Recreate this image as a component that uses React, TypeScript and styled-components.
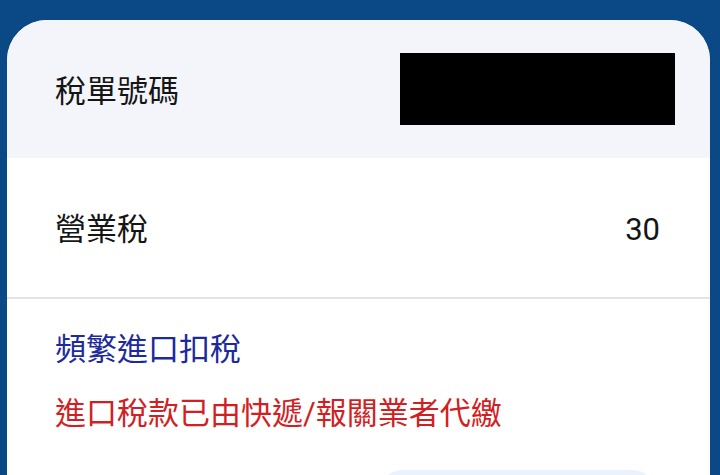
import React from "react";
import styled, { createGlobalStyle } from "styled-components";

const Global = createGlobalStyle`
  html, body {
    margin: 0;
    padding: 0;
    background: #0a4886;
    height: 100%;
    overflow: hidden;
  }
  body {
    font-family: Roboto, "Noto Sans CJK TC", "Noto Sans", sans-serif;
  }
`;

const Page = styled.div`
  width: 720px;
  height: 475px;
  box-sizing: border-box;
  padding: 20px 10px 0 7px;
  overflow: hidden;
`;

const Card = styled.div`
  background: #ffffff;
  border-radius: 40px 40px 0 0;
  overflow: hidden;
  display: flex;
  flex-direction: column;
  height: 100%;
`;

const Row = styled.div<{ $tint?: boolean; $height: number }>`
  display: flex;
  align-items: center;
  justify-content: space-between;
  height: ${(p) => p.$height}px;
  padding: 0 50px 0 48px;
  background: ${(p) => (p.$tint ? "#f3f5fa" : "#ffffff")};
  flex-shrink: 0;
`;

const Label = styled.span`
  font-size: 31px;
  line-height: 36px;
  padding-top: 5px;
  color: #151515;
`;

const Value = styled.span`
  font-size: 31px;
  line-height: 36px;
  padding-top: 5px;
  color: #151515;
`;

const Redacted = styled.div`
  width: 275px;
  height: 72px;
  background: #000;
  margin-right: -15px;
`;

const Divider = styled.div`
  height: 2px;
  background: #e3e4e6;
  flex-shrink: 0;
`;

const Notes = styled.div`
  display: flex;
  flex-direction: column;
  gap: 28px;
  padding: 33px 48px 0;
`;

const Note = styled.div<{ $color: string }>`
  font-size: 31px;
  line-height: 36px;
  color: ${(p) => p.$color};
`;

const Actions = styled.div`
  display: flex;
  padding: 38px 0 0 373px;
`;

const GhostButton = styled.div`
  width: 275px;
  height: 60px;
  border-radius: 22px;
  background: #eaf3fd;
`;

export default function App() {
  return (
    <>
      <Global />
      <Page>
        <Card>
          <Row $tint $height={138}>
            <Label>稅單號碼</Label>
            <Redacted />
          </Row>
          <Row $height={139}>
            <Label>營業稅</Label>
            <Value>30</Value>
          </Row>
          <Divider />
          <Notes>
            <Note $color="#1d2a9c">頻繁進口扣稅</Note>
            <Note $color="#d21f23">進口稅款已由快遞/報關業者代繳</Note>
          </Notes>
          <Actions>
            <GhostButton />
          </Actions>
        </Card>
      </Page>
    </>
  );
}
